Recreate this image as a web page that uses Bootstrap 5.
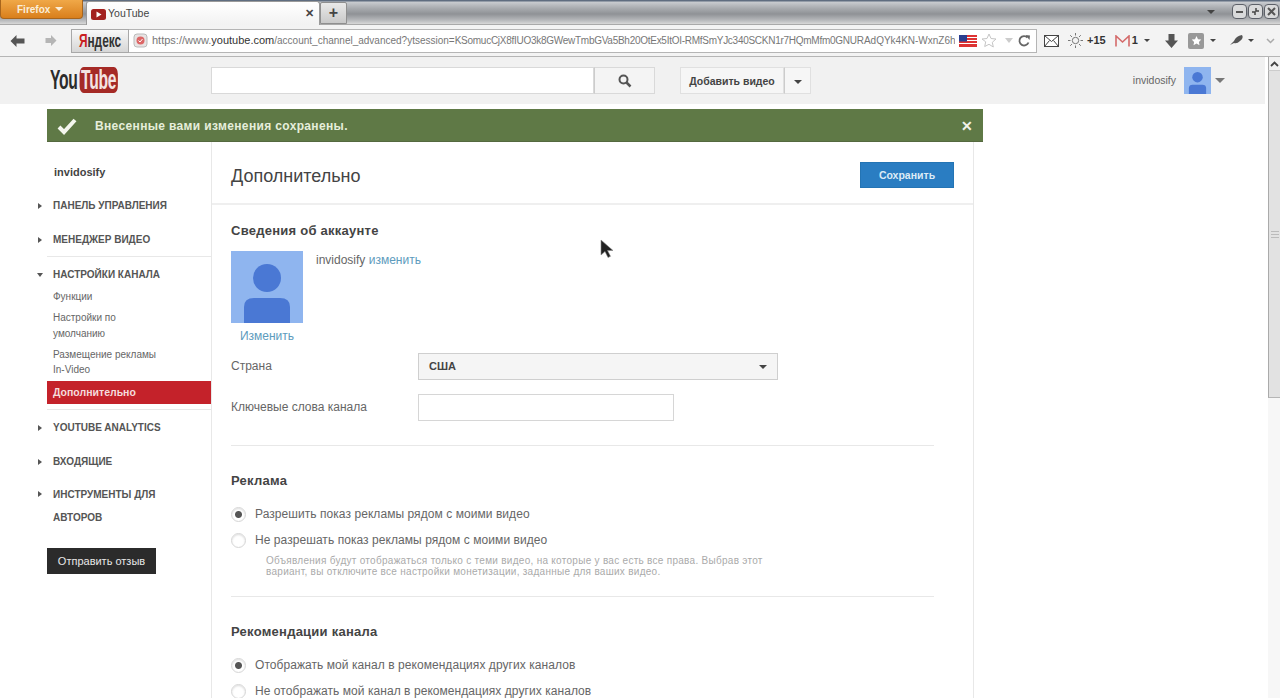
<!DOCTYPE html>
<html lang="ru">
<head>
  <meta charset="UTF-8" />
  <meta name="viewport" content="width=device-width, initial-scale=1.0"/>
  <title>YouTube</title>
  <link href="https://cdn.jsdelivr.net/npm/bootstrap@5.3.0/dist/css/bootstrap.min.css" rel="stylesheet">
  <style>
    html, body { height: 698px; overflow: hidden; }
    body { font-family: "Liberation Sans", Arial, sans-serif; font-size: 12px; color: #555; background: #fff; position: relative; }

    /* browser chrome */
    .ff-tabs { height: 24px; background: linear-gradient(#5f6d80 0, #5f6d80 1px, #c9ccd0 2px, #a9acb0 8px, #8f9296 14px, #b5b7ba 20px, #d8d8d8 24px); }
    .ff-btn { width: 83px; height: 19px; background: linear-gradient(#f0a848, #d97f1c); border: 1px solid #a8651c; border-top: 0; border-radius: 0 0 4px 4px; color: #fbeed8; font-size: 10px; font-weight: 700; line-height: 19px; padding-left: 16px; }
    .ff-btn i { display: inline-block; border: 4px solid transparent; border-top-color: #fbeed8; border-bottom: 0; margin-left: 5px; vertical-align: 2px; }
    .ff-tab { width: 234px; height: 24px; margin-left: 3px; margin-top: 1px; padding: 1px 5px 0 4px; background: linear-gradient(#fff, #f2f2f2); border: 1px solid #9a9a9a; border-bottom: 0; border-radius: 3px 3px 0 0; font-size: 10.5px; color: #444; }
    .ff-new { width: 27px; height: 22px; margin-top: 2px; background: linear-gradient(#e9e9e9, #c9c9c9); border: 1px solid #8f8f8f; border-radius: 2px 2px 0 0; color: #444; }
    .win-btn { width: 15px; height: 15px; border: 1px solid #5c6068; border-radius: 4px; background: #d9dadb; }
    .ff-nav { height: 33px; background: #f3f3f3; border-bottom: 1px solid #b5b5b5; border-top: 1px solid #a9a9a9; }
    .ya-btn { width: 58px; height: 24px; margin-left: 14px; background: linear-gradient(#f8f8f8, #d6d6d6); border: 1px solid #a8a8a8; overflow: hidden; }
    .ya-word { flex: none; font-size: 18px; font-weight: 700; line-height: 22px; color: #333; transform: scaleX(.66); }
    .ya-word b { color: #c9201f; }
    .url-bar { width: 908px; height: 24px; background: #fff; border: 1px solid #b5b5b5; border-left: 0; font-size: 11px; color: #777; white-space: nowrap; overflow: hidden; }
    .url-bar b { color: #333; font-weight: 400; }
    .url-text { width: 803px; overflow: hidden; }
    .url-path { font-size: 10px; }
    .url-query { letter-spacing: -.27px; }
    .tool-num { font-size: 11px; font-weight: 700; color: #333; }
    .tool-arrow { display: inline-block; border: 3px solid transparent; border-top-color: #444; border-bottom: 0; }

    /* page */
    .page-wrap { height: 641px; }
    .page-main { width: 1268px; overflow: hidden; }
    .v-scroll { width: 12px; background: #f7f7f7; }
    .v-up { height: 14px; background: #f1f1f1; border-left: 1px solid #aaa; border-bottom: 1px solid #ccc; }
    .v-thumb { height: 327px; background: #e2e2e2; border-left: 1px solid #aaa; border-bottom: 1px solid #b5b5b5; }
    .v-grip { width: 8px; height: 7px; border-top: 1px solid #bbb; border-bottom: 1px solid #bbb; background: linear-gradient(#e2e2e2 2px, #bbb 2px, #bbb 3px, #e2e2e2 3px); }
    .yt-head { height: 47px; margin-right: 3px; background: #f1f1f1; }
    .yt-logo { width: 210px; flex: none; padding-left: 50px; }
    .yt-logo-word { display: inline-block; font-size: 27px; font-weight: 700; line-height: 26px; letter-spacing: -.5px; color: #2b2b2b; white-space: nowrap; transform: scaleX(.58); transform-origin: left center; }
    .yt-logo-word span { background: #a52a26; color: #f3e4e2; border-radius: 7px; padding: 0 3px; margin-left: 3px; display: inline-block; }
    .yt-search { width: 383px; height: 27px; margin-left: 1px; border: 1px solid #d9d9d9; border-radius: 0; background: #fff; box-shadow: none; flex: none; }
    .yt-sbtn { width: 61px; height: 27px; border: 1px solid #d9d9d9; border-left: 1px solid #ccc; background: #f4f4f4; border-radius: 0; padding: 0; }
    .yt-add { height: 27px; width: 104px; margin-left: 25px; padding: 0; background: #f6f6f6; border: 1px solid #e0e0e0; border-radius: 0; font-size: 10.5px; font-weight: 700; color: #444; line-height: 27px; }
    .yt-drop { height: 27px; width: 27px; padding: 0; background: #f6f6f6; border: 1px solid #e0e0e0; border-left: 1px solid #ccc; border-radius: 0; }
    .caret-dn { display: inline-block; border: 4px solid transparent; border-top-color: #444; border-bottom: 0; vertical-align: 2px; }
    .yt-user { margin-left: auto; padding-right: 40px; font-size: 10.5px; color: #666; }

    .saved-bar { height: 33px; width: 936px; margin: 5px 0 0 47px; padding-top: 2px; background: #5f7946; color: #e6eedb; font-size: 12px; font-weight: 700; letter-spacing: .35px; border-bottom: 1px solid #55693f; }
    .saved-close { margin-left: auto; margin-right: 10px; font-size: 14px; color: #f2f2ea; font-weight: 700; line-height: 1; }

    .page-cols { margin-left: 47px; width: 927px; height: 560px; }
    .side-col { width: 165px; border-right: 1px solid #e8e8e8; flex: none; }
    .side-user { margin-top: 20px; height: 20px; line-height: 20px; padding-left: 7px; font-size: 11px; font-weight: 700; color: #444; }
    .side-sec { position: relative; height: 20px; line-height: 22px; padding-left: 6px; font-size: 10px; font-weight: 700; color: #555; }
    .side-sec::before { content: ""; position: absolute; left: -9px; top: 8px; border: 3px solid transparent; border-left: 4px solid #555; border-right: 0; }
    .side-sec.is-open::before { left: -10px; top: 9px; border: 3px solid transparent; border-top: 4px solid #555; border-bottom: 0; }
    .side-sec.two-line { height: 46px; line-height: 23px; }
    .side-sec.two-line::before { top: 8px; }
    .side-link { padding-left: 6px; line-height: 16px; font-size: 10px; color: #666; }
    .side-link.tight { line-height: 15px; }
    .side-active { height: 23px; line-height: 23px; padding-left: 6px; background: #c4222a; color: #f4dcdc; font-size: 10.5px; font-weight: 700; }
    .side-rule { height: 1px; background: #e8e8e8; }
    .yt-send { height: 26px; width: 109px; padding: 0; background: #2b2b2b; border: 0; border-radius: 0; color: #e8e8e8; font-size: 11px; line-height: 26px; }

    .main-col { width: 762px; border-right: 1px solid #e8e8e8; flex: none; }
    .main-head { height: 63px; padding: 20px 19px 0 19px; border-bottom: 2px solid #efefef; }
    .main-title { font-size: 18px; line-height: 29px; color: #444; margin: 0; font-weight: 400; }
    .yt-save { width: 94px; height: 26px; padding: 0; background: #2a7dc2; border: 1px solid #2474b4; border-radius: 0; color: #dcebf6; font-size: 10.5px; font-weight: 700; line-height: 24px; }
    .main-body { padding-left: 19px; }
    .sec-title { height: 20px; line-height: 22px; font-size: 13px; font-weight: 700; color: #444; letter-spacing: .25px; margin: 0; }
    .ava-name { margin-left: 13px; line-height: 18px; font-size: 12px; color: #666; }
    .yt-link { color: #5d9bbd; text-decoration: none; }
    .ava-change { width: 72px; line-height: 16px; text-align: center; font-size: 12px; }
    .field-label { width: 187px; font-size: 12px; color: #666; flex: none; }
    .label-up { padding-bottom: 2px; }
    .yt-select { width: 360px; height: 27px; background: #f5f5f5; border: 1px solid #cfcfcf; padding: 0 10px; font-size: 11px; font-weight: 700; color: #444; }
    .yt-input { width: 256px; height: 27px; border: 1px solid #d6d6d6; border-radius: 0; background: #fff; }
    .sec-rule { width: 703px; height: 1px; background: #e8e8e8; }
    .radio-row { height: 20px; line-height: 22px; font-size: 12px; letter-spacing: .06px; color: #666; margin: 0; padding: 0; min-height: 0; }
    .radio-row .form-check-input { float: none; width: 15px; height: 15px; margin: 0 9px 0 0; border: 1px solid #d6d6d6; background: #fff; box-shadow: inset 0 1px 2px #ddd; flex: none; }
    .radio-row .form-check-input:checked { background: radial-gradient(circle, #555 0, #555 3px, #fff 4px); border-color: #d6d6d6; }
    .radio-note { padding-left: 35px; width: 540px; font-size: 10px; line-height: 11px; color: #aaa; letter-spacing: .28px; }
    .m-cursor { position: absolute; left: 600px; top: 239px; }
  </style>
</head>
<body>

<!-- firefox tab strip -->
<div class="ff-tabs d-flex align-items-start">
  <div class="ff-btn">Firefox<i></i></div>
  <div class="ff-tab d-flex align-items-center">
    <svg width="15" height="11" viewBox="0 0 15 11"><rect width="15" height="11" rx="2.5" fill="#a3211f"/><path d="M5.5 2.5v6l5-3z" fill="#fff"/></svg>
    <span style="margin-left:2px">YouTube</span>
    <span class="ms-auto fw-bold">✕</span>
  </div>
  <div class="ff-new text-center fw-bold fs-6 lh-sm">+</div>
  <div class="ms-auto d-flex align-items-center pt-1" style="gap:1px;padding-right:1px">
    <span class="caret-dn me-3"></span>
    <div class="win-btn d-flex align-items-center justify-content-center"><svg width="9" height="9" viewBox="0 0 9 9"><path d="M1 5h7" stroke="#555" stroke-width="2"/></svg></div>
    <div class="win-btn d-flex align-items-center justify-content-center"><svg width="9" height="9" viewBox="0 0 9 9"><path d="M5 1v3h3M4 8V5H1" stroke="#444" stroke-width="1.5" fill="none"/></svg></div>
    <div class="win-btn d-flex align-items-center justify-content-center"><svg width="9" height="9" viewBox="0 0 9 9"><path d="M1 1l7 7M8 1l-7 7" stroke="#555" stroke-width="2"/></svg></div>
  </div>
</div>

<!-- firefox nav toolbar -->
<div class="ff-nav d-flex align-items-center">
  <svg style="margin-left:10px" width="15" height="14" viewBox="0 0 15 14"><path d="M.5 7l6-6v3.500h8v5h-8V13z" fill="#555"/></svg>
  <svg style="margin-left:20px" width="12" height="13" viewBox="0 0 12 13"><path d="M11.500 6.500L6 1v3H.5v5H6v3z" fill="#b5b5b5"/></svg>
  <div class="ya-btn d-flex justify-content-center"><span class="ya-word"><b>Я</b>ндекс</span></div>
  <div class="url-bar d-flex align-items-center">
    <svg class="mx-1" width="15" height="15" viewBox="0 0 15 15"><rect x="1" y="1" width="13" height="13" rx="3" fill="#e8e4e4" stroke="#bbb"/><circle cx="7.5" cy="7.5" r="4" fill="#d66" /><path d="M5.5 7.5l1.5 1.5 2.5-3" stroke="#fff" fill="none"/></svg>
    <div class="url-text">https://www.<b>youtube.com</b><span class="url-path">/account_channel_advanced?ytsession=<span class="url-query">KSomucCjX8fIUO3k8GWewTmbGVa5Bh20OtEx5ItOI-RMfSmYJc340SCKN1r7HQmMfm0GNU</span>RAdQYk4KN-WxnZ6h</span></div>
    <svg class="ms-1" width="18" height="12" viewBox="0 0 18 12"><rect width="18" height="12" fill="#d33"/><path d="M0 2.5h18M0 5.500h18M0 8.500h18" stroke="#fff" stroke-width="1.200"/><rect width="8" height="6.500" fill="#2b3f90"/></svg>
    <svg class="ms-1" width="16" height="15" viewBox="0 0 16 15"><path d="M8 1l2 4.500 5 .5-3.700 3.300 1 4.700L8 11.300 3.700 13.500l1-4.700L1 6l5-.5z" fill="#fff" stroke="#c5c5c5"/></svg>
    <span class="tool-arrow ms-2" style="border-width:5px 4px 0;border-top-color:#ccc"></span>
    <svg class="ms-1" width="14" height="14" viewBox="0 0 14 14"><path d="M11.500 8.500A4.700 4.700 0 1 1 10.500 3.500" stroke="#666" stroke-width="1.800" fill="none"/><path d="M8.500 1l4.500.5-.5 4.500z" fill="#666"/></svg>
  </div>
  <svg style="margin-left:7px" width="15" height="12" viewBox="0 0 15 12"><rect x=".5" y=".5" width="14" height="11" fill="#fff" stroke="#444"/><path d="M.5.500l7 6 7-6M.5 11.500l5-6M14.500 11.500l-5-6" stroke="#444" fill="none"/></svg>
  <svg style="margin-left:9px" width="15" height="15" viewBox="0 0 15 15"><circle cx="7.500" cy="7.500" r="3.200" fill="none" stroke="#777"/><path d="M7.500 0v2.500M7.500 12.500V15M0 7.500h2.500M12.500 7.500H15M2.200 2.200L4 4M11 11l1.800 1.800M12.800 2.200L11 4M4 11l-1.800 1.800" stroke="#777"/></svg>
  <span class="tool-num ms-1">+15</span>
  <svg style="margin-left:9px" width="15" height="12" viewBox="0 0 15 12"><path d="M1 11.500V1l6.500 6L14 1v10.500" fill="none" stroke="#d46a6a" stroke-width="1.600"/></svg>
  <span class="tool-num" style="margin-left:2px">1</span>
  <span class="tool-arrow" style="margin-left:6px"></span>
  <svg style="margin-left:14px" width="15" height="14" viewBox="0 0 15 14"><path d="M4.500 0h6v6.500H14L7.500 14 1 6.500h3.500z" fill="#555"/></svg>
  <svg style="margin-left:9px" width="16" height="16" viewBox="0 0 16 16"><rect width="16" height="16" rx="2" fill="#999"/><path d="M8.500 3l1.500 3.200 3.300.4-2.400 2.300.6 3.300-3-1.600-3 1.600.6-3.300-2.400-2.300L7 6.200z" fill="#fff"/></svg>
  <span class="tool-arrow" style="margin-left:6px"></span>
  <svg style="margin-left:13px" width="15" height="13" viewBox="0 0 15 13"><path d="M1 11L5 7q2-5 8-6 2 3-2 6-3 3-6 2z" fill="#555"/></svg>
  <span class="tool-arrow ms-1"></span>
  <svg style="margin-left:12px" width="9" height="6" viewBox="0 0 9 6"><path d="M1 1l3.500 3.500L8 1" stroke="#aaa" stroke-width="1.500" fill="none"/></svg>
</div>

<div class="page-wrap d-flex">
  <div class="page-main">
    <!-- youtube header -->
    <div class="yt-head d-flex align-items-center">
      <div class="yt-logo"><div class="yt-logo-word">You<span>Tube</span></div></div>
      <input class="form-control yt-search" type="text">
      <button class="btn yt-sbtn d-flex align-items-center justify-content-center"><svg width="14" height="14" viewBox="0 0 14 14"><circle cx="5.500" cy="5.500" r="4" fill="none" stroke="#555" stroke-width="2"/><path d="M8.500 8.500l4 4" stroke="#555" stroke-width="2.500"/></svg></button>
      <button class="btn yt-add">Добавить видео</button>
      <button class="btn yt-drop"><span class="caret-dn"></span></button>
      <div class="yt-user d-flex align-items-center">
        <span>invidosify</span>
        <svg style="margin-left:8px" width="27" height="27" viewBox="0 0 72 72"><rect width="72" height="72" fill="#8fb5ef"/><circle cx="36" cy="27" r="14" fill="#4a78d4"/><path d="M13 72V56q0-9 10-9h26q10 0 10 9v16z" fill="#4a78d4"/></svg>
        <span class="caret-dn ms-1" style="border-width:5px 5px 0;border-top-color:#777"></span>
      </div>
    </div>

    <!-- saved notice -->
    <div class="saved-bar d-flex align-items-center">
      <svg style="margin-left:10px;margin-right:18px" width="20" height="17" viewBox="0 0 20 17"><path d="M2 9l5 5L18 2" fill="none" stroke="#f4f6ee" stroke-width="4"/></svg>
      <span>Внесенные вами изменения сохранены.</span>
      <span class="saved-close">✕</span>
    </div>

    <div class="page-cols d-flex">
      <!-- left menu -->
      <div class="side-col">
        <div class="side-user">invidosify</div>
        <div class="side-sec" style="margin-top:13px">ПАНЕЛЬ УПРАВЛЕНИЯ</div>
        <div class="side-sec" style="margin-top:14px">МЕНЕДЖЕР ВИДЕО</div>
        <div class="side-rule" style="margin-top:7px"></div>
        <div class="side-sec is-open" style="margin-top:7px">НАСТРОЙКИ КАНАЛА</div>
        <div class="side-link" style="margin-top:5px">Функции</div>
        <div class="side-link" style="margin-top:5px">Настройки по<br>умолчанию</div>
        <div class="side-link tight" style="margin-top:5px">Размещение рекламы<br>In-Video</div>
        <div class="side-active" style="margin-top:4px">Дополнительно</div>
        <div class="side-rule" style="margin-top:5px"></div>
        <div class="side-sec" style="margin-top:7px">YOUTUBE ANALYTICS</div>
        <div class="side-sec" style="margin-top:14px">ВХОДЯЩИЕ</div>
        <div class="side-sec two-line" style="margin-top:12px">ИНСТРУМЕНТЫ ДЛЯ<br>АВТОРОВ</div>
        <button class="btn yt-send d-block" style="margin-top:19px">Отправить отзыв</button>
      </div>

      <!-- settings -->
      <div class="main-col">
        <div class="main-head d-flex justify-content-between align-items-start">
          <h1 class="main-title">Дополнительно</h1>
          <button class="btn yt-save">Сохранить</button>
        </div>
        <div class="main-body">
          <h2 class="sec-title" style="margin-top:15px">Сведения об аккаунте</h2>
          <div class="d-flex align-items-start" style="margin-top:11px">
            <svg width="72" height="72" viewBox="0 0 72 72"><rect width="72" height="72" fill="#8fb5ef"/><circle cx="36" cy="27" r="14" fill="#4a78d4"/><path d="M13 72V56q0-9 10-9h26q10 0 10 9v16z" fill="#4a78d4"/></svg>
            <div class="ava-name">invidosify <a class="yt-link" href="#">изменить</a></div>
          </div>
          <div class="ava-change" style="margin-top:5px"><a class="yt-link" href="#">Изменить</a></div>
          <div class="d-flex align-items-center" style="margin-top:9px">
            <label class="field-label label-up">Страна</label>
            <div class="yt-select d-flex align-items-center justify-content-between"><span>США</span><span class="caret-dn"></span></div>
          </div>
          <div class="d-flex align-items-center" style="margin-top:14px">
            <label class="field-label label-up">Ключевые слова канала</label>
            <input class="form-control yt-input" type="text">
          </div>
          <div class="sec-rule" style="margin-top:24px"></div>

          <h2 class="sec-title" style="margin-top:24px">Реклама</h2>
          <label class="form-check radio-row d-flex align-items-center" style="margin-top:14px"><input class="form-check-input" type="radio" name="ads" checked>Разрешить показ рекламы рядом с моими видео</label>
          <label class="form-check radio-row d-flex align-items-center" style="margin-top:6px"><input class="form-check-input" type="radio" name="ads">Не разрешать показ рекламы рядом с моими видео</label>
          <div class="radio-note" style="margin-top:5px">Объявления будут отображаться только с теми видео, на которые у вас есть все права. Выбрав этот вариант, вы отключите все настройки монетизации, заданные для ваших видео.</div>
          <div class="sec-rule" style="margin-top:19px"></div>

          <h2 class="sec-title" style="margin-top:24px">Рекомендации канала</h2>
          <label class="form-check radio-row d-flex align-items-center" style="margin-top:14px"><input class="form-check-input" type="radio" name="recs" checked>Отображать мой канал в рекомендациях других каналов</label>
          <label class="form-check radio-row d-flex align-items-center" style="margin-top:6px"><input class="form-check-input" type="radio" name="recs">Не отображать мой канал в рекомендациях других каналов</label>
        </div>
      </div>
    </div>
  </div>

  <!-- page scrollbar -->
  <div class="v-scroll">
    <div class="v-up d-flex align-items-center justify-content-center"><svg width="9" height="6" viewBox="0 0 9 6"><path d="M1 5l3.500-3.500L8 5" stroke="#444" stroke-width="1.800" fill="none"/></svg></div>
    <div class="v-thumb d-flex align-items-center justify-content-center"><div class="v-grip"></div></div>
  </div>
</div>

<svg class="m-cursor" width="15" height="21" viewBox="0 0 15 21"><path d="M1 1v15l4-3.500 3 6 2.500-1.200-3-5.800H13z" fill="#222" stroke="#888" stroke-width=".6"/></svg>

<script src="https://cdn.jsdelivr.net/npm/bootstrap@5.3.0/dist/js/bootstrap.bundle.min.js"></script>
</body>
</html>
